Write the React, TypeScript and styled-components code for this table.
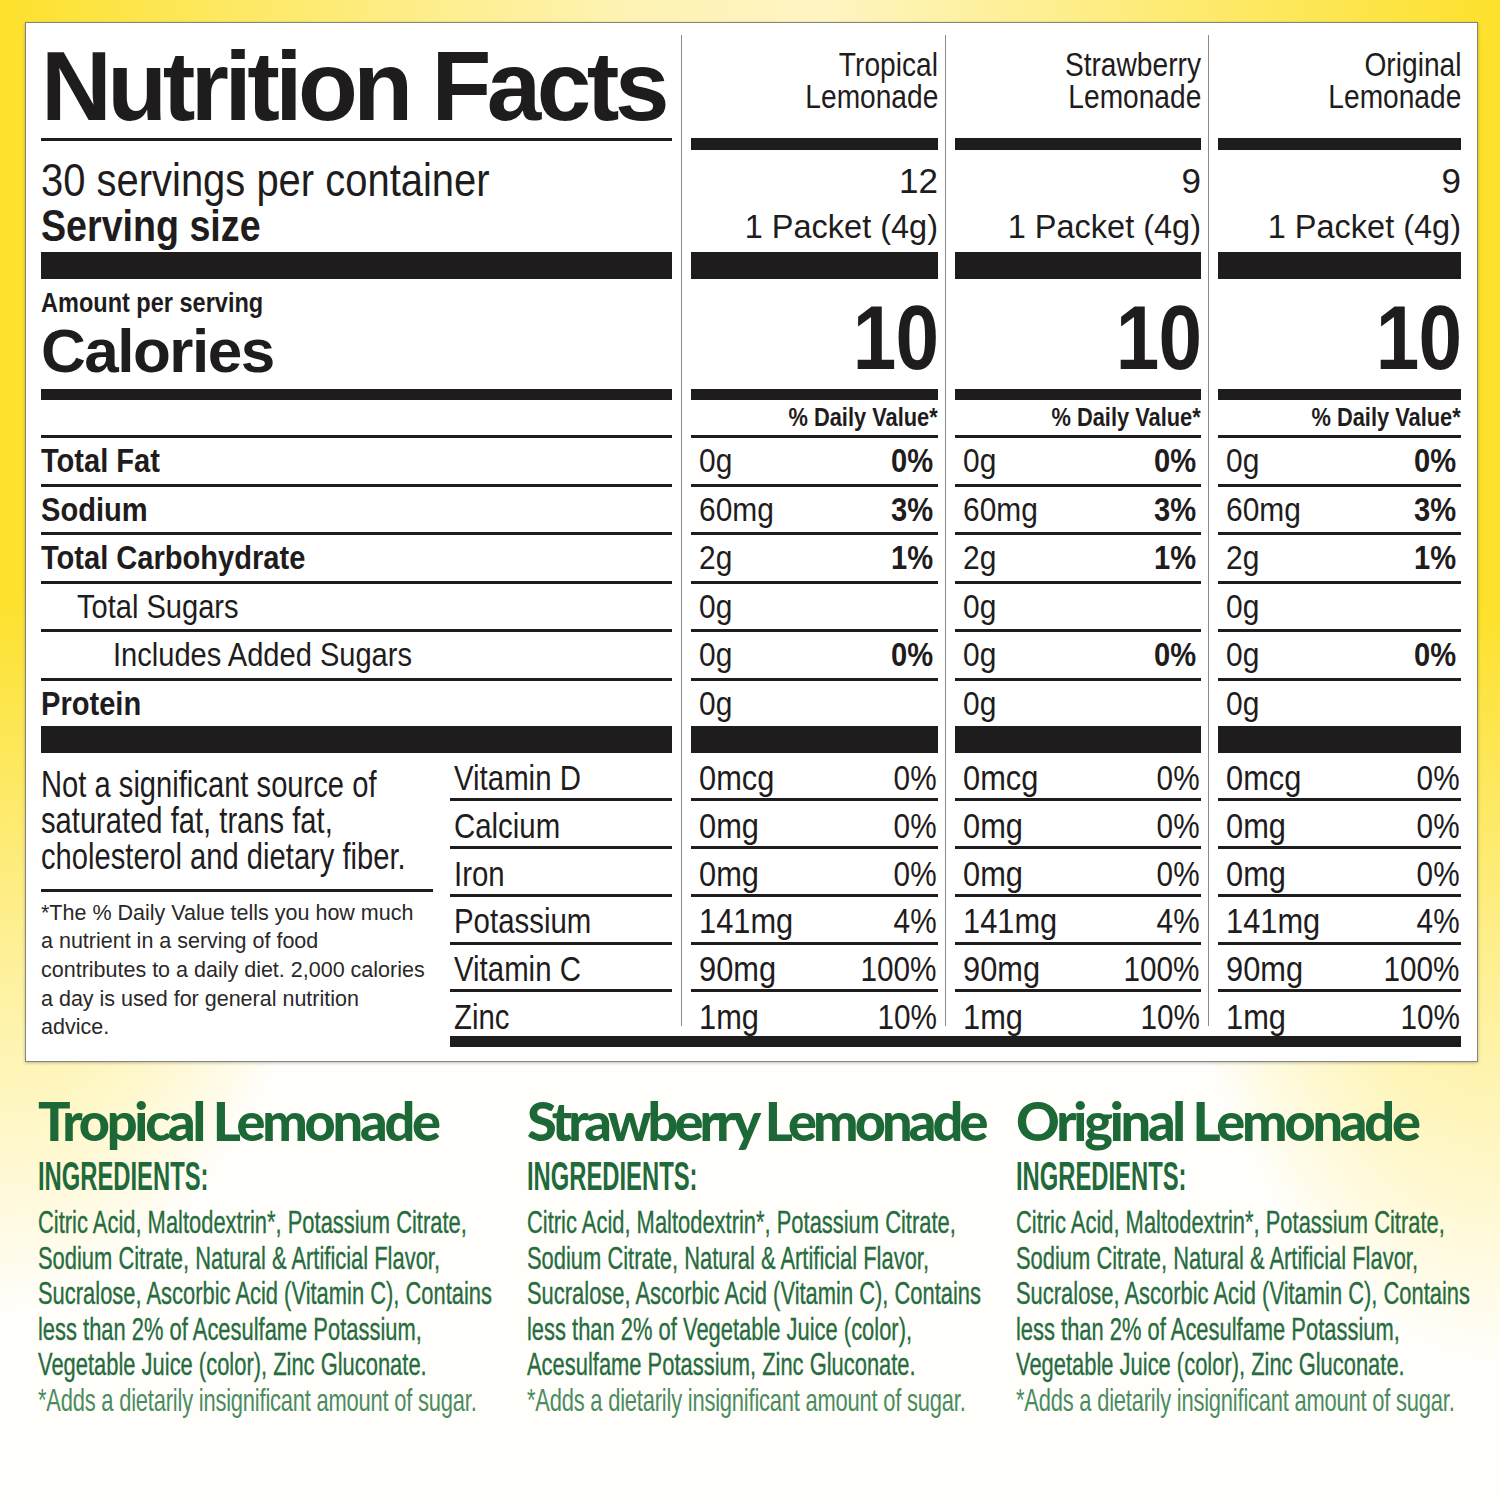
import React from 'react';
import styled, { createGlobalStyle } from 'styled-components';

const SANS = `"Liberation Sans", Arial, Helvetica, sans-serif`;
const INK = '#1f1c1d';

const GlobalStyle = createGlobalStyle`
  html, body { margin: 0; padding: 0; }
  body { width: 1500px; height: 1500px; overflow: hidden; background: #fff; font-family: ${SANS}; }
  *, *::before, *::after { box-sizing: border-box; }
`;

/* condensed text: Helvetica Condensed look from Liberation Sans */
const Cond = styled.span<{ $r?: boolean; $k?: number }>`
  display: inline-block;
  white-space: nowrap;
  transform: scaleX(${(p) => p.$k ?? 0.85});
  transform-origin: ${(p) => (p.$r ? 'right' : 'left')} center;
`;

const Page = styled.div`
  width: 1500px;
  height: 1500px;
  padding: 22px 0 0 25px;
  display: flex;
  flex-direction: column;
  background:
    linear-gradient(90deg, #fde12c 0%, #fde85e 14%, #fef3b4 42%, #fef5c2 55%, #fdeb74 78%, #fde12c 100%) 0 0 / 100% 40px no-repeat,
    radial-gradient(ellipse 430px 1050px at 0 260px, #fde12c 0%, #fde12c 32%, rgba(253, 225, 44, 0.45) 68%, rgba(253, 225, 44, 0) 100%),
    radial-gradient(ellipse 430px 1100px at 100% 260px, #fde12c 0%, #fde12c 32%, rgba(253, 225, 44, 0.45) 68%, rgba(253, 225, 44, 0) 100%),
    #fffefa;
`;

const Card = styled.section`
  width: 1453px;
  height: 1040px;
  flex: none;
  background: #fff;
  border: 1px solid #85857a;
  box-shadow: 0 1px 3px rgba(0, 0, 0, 0.25);
  padding: 12px 16px 0 15px;
  display: flex;
  flex-direction: column;
  color: ${INK};
  font-family: ${SANS};
`;

const Upper = styled.div`
  display: flex;
  height: 718.5px;
  flex: none;
`;

const Lower = styled.div`
  display: flex;
  flex: none;
`;

const LeftPanel = styled.div`
  width: 631px;
  flex: none;
  display: flex;
  flex-direction: column;
`;

const Cols = styled.div`
  display: flex;
  margin-left: 9px;
`;

const ProductCol = styled.div<{ $w: number; $last?: boolean }>`
  width: ${(p) => p.$w}px;
  flex: none;
  border-left: 1px solid #8a8a8a;
  padding-left: 9px;
  padding-right: ${(p) => (p.$last ? 0 : 7)}px;
  display: flex;
  flex-direction: column;
`;

const Bar = styled.div<{ $h: number }>`
  height: ${(p) => p.$h}px;
  flex: none;
  background: ${INK};
`;

/* ---------- left panel ---------- */
const TitleBlock = styled.div`
  height: 103px;
  flex: none;
  padding-top: 2px;
`;

const Title = styled.h1`
  margin: 0;
  font-weight: 700;
  font-size: 98px;
  line-height: 98px;
  letter-spacing: -4.5px;
  white-space: nowrap;
`;

const ServingBlock = styled.div`
  height: 111.5px;
  flex: none;
  padding-top: 18.5px;
`;

const ServingsLine = styled.div`
  font-size: 47px;
  line-height: 41px;
`;

const ServingSize = styled.div`
  margin-top: 4px;
  font-weight: 700;
  font-size: 44px;
  line-height: 43px;
`;

const CalBlock = styled.div`
  height: 110px;
  flex: none;
  padding-top: 10px;
`;

const AmountLine = styled.div`
  font-weight: 700;
  font-size: 28px;
  line-height: 28px;
`;

const CaloriesLabel = styled.div`
  margin-top: 2.5px;
  font-weight: 700;
  font-size: 62px;
  line-height: 62px;
  letter-spacing: -1.5px;
`;

const Spacer = styled.div<{ $h: number }>`
  height: ${(p) => p.$h}px;
  flex: none;
`;

const LabelRow = styled.div<{ $indent: number; $bold: boolean }>`
  height: 45.5px;
  flex: none;
  display: flex;
  align-items: center;
  padding-left: ${(p) => p.$indent}px;
  font-weight: ${(p) => (p.$bold ? 700 : 400)};
  font-size: 34px;
`;

/* ---------- product columns ---------- */
const ColHead = styled.div`
  height: 103px;
  flex: none;
  padding-top: 14px;
  text-align: right;
  font-size: 33.5px;
  line-height: 32px;
`;

const ColServing = styled.div`
  height: 102px;
  flex: none;
  padding-top: 8px;
  text-align: right;
  font-size: 32.5px;
  line-height: 45px;
  white-space: nowrap;
`;

const ServCount = styled.span`
  font-size: 35px;
`;

const ColCalories = styled.div`
  height: 110px;
  flex: none;
  padding-top: 14px;
  text-align: right;
  font-weight: 700;
  font-size: 90px;
  line-height: 90px;
  letter-spacing: -1px;
`;

const DVHeader = styled.div`
  height: 35px;
  flex: none;
  text-align: right;
  font-weight: 700;
  font-size: 26px;
  line-height: 35px;
`;

const ValueRow = styled.div`
  height: 45.5px;
  flex: none;
  display: flex;
  align-items: center;
  justify-content: space-between;
  padding: 0 5px 0 8px;
  font-size: 34px;
`;

const Pct = styled(Cond)<{ $bold?: boolean }>`
  font-weight: ${(p) => (p.$bold ? 700 : 400)};
`;

/* ---------- lower section ---------- */
const NoteCol = styled.div`
  width: 409px;
  flex: none;
  padding: 13.5px 17px 0 0;
`;

const NoteText = styled.p`
  margin: 0;
  font-size: 36px;
  line-height: 36px;
`;

const NoteRule = styled.div`
  height: 3px;
  margin-top: 14px;
  background: ${INK};
`;

const Footnote = styled.p`
  margin: 6.5px 0 0;
  font-size: 21.5px;
  line-height: 28.7px;
  color: #2a2828;
  white-space: nowrap;
`;

const VitBlock = styled.div`
  flex: 1;
  display: flex;
  flex-direction: column;
`;

const VitGrid = styled.div`
  display: flex;
  height: 272.5px;
`;

const NamesCol = styled.div`
  width: 222px;
  flex: none;
  display: flex;
  flex-direction: column;
`;

const VitRow = styled.div<{ $last?: boolean; $split?: boolean }>`
  height: ${(p) => (p.$last ? 33.5 : 44.75)}px;
  flex: none;
  display: flex;
  justify-content: ${(p) => (p.$split ? 'space-between' : 'flex-start')};
  padding: ${(p) => (p.$split ? '7.5px 1px 0 8px' : '7.5px 0 0 4px')};
  font-size: 35px;
  line-height: 34px;
`;

const BottomBar = styled.div`
  height: 11px;
  margin-top: 10px;
  background: ${INK};
`;

/* ---------- ingredients ---------- */
const IngSection = styled.div`
  display: flex;
  margin: 32px 0 0 13px;
`;

const IngCol = styled.div`
  width: 489px;
  flex: none;
`;

const IngTitle = styled.h2<{ $tight?: boolean }>`
  margin: 0;
  font-family: Lato, "Liberation Sans", sans-serif;
  font-weight: 900;
  font-size: 54px;
  line-height: 54px;
  letter-spacing: ${(p) => (p.$tight ? -3.9 : -3.2)}px;
  color: #1c6836;
  white-space: nowrap;
`;

const IngLabel = styled.div`
  margin-top: 8px;
  font-weight: 700;
  font-size: 41px;
  line-height: 40px;
  color: #1e6a3a;
  transform: scaleX(0.58);
  transform-origin: left center;
  white-space: nowrap;
`;

const IngBody = styled.div`
  margin-top: 9px;
  width: 720px;
  transform: scaleX(0.685);
  transform-origin: left top;
  font-size: 32px;
  line-height: 35.6px;
`;

const IngLine = styled.div<{ $note?: boolean }>`
  white-space: nowrap;
  color: ${(p) => (p.$note ? '#4a8c5e' : '#266c3e')};
  -webkit-text-stroke: ${(p) => (p.$note ? '0' : '0.35px')} currentColor;
  letter-spacing: ${(p) => (p.$note ? '-0.3px' : '0')};
`;

/* ---------- data ---------- */
const products = [
  { name: ['Tropical', 'Lemonade'], servings: '12', w: 264 },
  { name: ['Strawberry', 'Lemonade'], servings: '9', w: 263 },
  { name: ['Original', 'Lemonade'], servings: '9', w: 253 },
];

const nutrients = [
  { label: 'Total Fat', bold: true, indent: 0, value: '0g', dv: '0%' },
  { label: 'Sodium', bold: true, indent: 0, value: '60mg', dv: '3%' },
  { label: 'Total Carbohydrate', bold: true, indent: 0, value: '2g', dv: '1%' },
  { label: 'Total Sugars', bold: false, indent: 36, value: '0g', dv: '' },
  { label: 'Includes Added Sugars', bold: false, indent: 72, value: '0g', dv: '0%' },
  { label: 'Protein', bold: true, indent: 0, value: '0g', dv: '' },
];

const vitamins = [
  { name: 'Vitamin D', value: '0mcg', dv: '0%' },
  { name: 'Calcium', value: '0mg', dv: '0%' },
  { name: 'Iron', value: '0mg', dv: '0%' },
  { name: 'Potassium', value: '141mg', dv: '4%' },
  { name: 'Vitamin C', value: '90mg', dv: '100%' },
  { name: 'Zinc', value: '1mg', dv: '10%' },
];

const standardLines = [
  'Citric Acid, Maltodextrin*, Potassium Citrate,',
  'Sodium Citrate, Natural & Artificial Flavor,',
  'Sucralose, Ascorbic Acid (Vitamin C), Contains',
  'less than 2% of Acesulfame Potassium,',
  'Vegetable Juice (color), Zinc Gluconate.',
];

const strawberryLines = [
  'Citric Acid, Maltodextrin*, Potassium Citrate,',
  'Sodium Citrate, Natural & Artificial Flavor,',
  'Sucralose, Ascorbic Acid (Vitamin C), Contains',
  'less than 2% of Vegetable Juice (color),',
  'Acesulfame Potassium, Zinc Gluconate.',
];

const ingredients = [
  { title: 'Tropical Lemonade', lines: standardLines, tight: false },
  { title: 'Strawberry Lemonade', lines: strawberryLines, tight: true },
  { title: 'Original Lemonade', lines: standardLines, tight: false },
];

const noteLines = ['Not a significant source of', 'saturated fat, trans fat,', 'cholesterol and dietary fiber.'];

const footLines = [
  '*The % Daily Value tells you how much',
  'a nutrient in a serving of food',
  'contributes to a daily diet. 2,000 calories',
  'a day is used for general nutrition',
  'advice.',
];

function Rows({ children }: { children: React.ReactNode[] }) {
  return (
    <>
      {children.map((c, i) => (
        <React.Fragment key={i}>
          {c}
          {i < children.length - 1 && <Bar $h={3} />}
        </React.Fragment>
      ))}
    </>
  );
}

export default function App() {
  return (
    <Page>
      <GlobalStyle />
      <Card>
        <Upper>
          <LeftPanel>
            <TitleBlock>
              <Title>Nutrition Facts</Title>
            </TitleBlock>
            <Bar $h={2.5} />
            <ServingBlock>
              <ServingsLine>
                <Cond $k={0.85}>30 servings per container</Cond>
              </ServingsLine>
              <ServingSize>
                <Cond $k={0.855}>Serving size</Cond>
              </ServingSize>
            </ServingBlock>
            <Bar $h={27} />
            <CalBlock>
              <AmountLine>
                <Cond $k={0.84}>Amount per serving</Cond>
              </AmountLine>
              <CaloriesLabel>Calories</CaloriesLabel>
            </CalBlock>
            <Bar $h={11} />
            <Spacer $h={35} />
            <Bar $h={3} />
            <Rows>
              {nutrients.map((n) => (
                <LabelRow key={n.label} $indent={n.indent} $bold={n.bold}>
                  <Cond $k={0.855}>{n.label}</Cond>
                </LabelRow>
              ))}
            </Rows>
            <Bar $h={27} />
          </LeftPanel>
          <Cols>
            {products.map((p, i) => (
              <ProductCol key={p.name[0]} $w={p.w} $last={i === products.length - 1}>
                <ColHead>
                  <Cond $r $k={0.84}>{p.name[0]}</Cond>
                  <br />
                  <Cond $r $k={0.84}>{p.name[1]}</Cond>
                </ColHead>
                <Bar $h={12} />
                <ColServing>
                  <ServCount>{p.servings}</ServCount>
                  <br />1 Packet (4g)
                </ColServing>
                <Bar $h={27} />
                <ColCalories>
                  <Cond $r $k={0.87}>10</Cond>
                </ColCalories>
                <Bar $h={11} />
                <DVHeader>
                  <Cond $r $k={0.84}>% Daily Value*</Cond>
                </DVHeader>
                <Bar $h={3} />
                <Rows>
                  {nutrients.map((n) => (
                    <ValueRow key={n.label}>
                      <Cond $k={0.88}>{n.value}</Cond>
                      <Pct $bold $r $k={0.857}>
                        {n.dv}
                      </Pct>
                    </ValueRow>
                  ))}
                </Rows>
                <Bar $h={27} />
              </ProductCol>
            ))}
          </Cols>
        </Upper>
        <Lower>
          <NoteCol>
            <NoteText>
              {noteLines.map((l, i) => (
                <React.Fragment key={l}>
                  <Cond $k={0.81}>{l}</Cond>
                  {i < noteLines.length - 1 && <br />}
                </React.Fragment>
              ))}
            </NoteText>
            <NoteRule />
            <Footnote>
              {footLines.map((l, i) => (
                <React.Fragment key={l}>
                  {l}
                  {i < footLines.length - 1 && <br />}
                </React.Fragment>
              ))}
            </Footnote>
          </NoteCol>
          <VitBlock>
            <VitGrid>
              <NamesCol>
                <Rows>
                  {vitamins.map((v, i) => (
                    <VitRow key={v.name} $last={i === vitamins.length - 1}>
                      <Cond $k={0.84}>{v.name}</Cond>
                    </VitRow>
                  ))}
                </Rows>
              </NamesCol>
              <Cols>
                {products.map((p, i) => (
                  <ProductCol key={p.name[0]} $w={p.w} $last={i === products.length - 1}>
                    <Rows>
                      {vitamins.map((v, j) => (
                        <VitRow key={v.name} $split $last={j === vitamins.length - 1}>
                          <Cond $k={0.88}>{v.value}</Cond>
                          <Pct $r $k={0.85}>
                            {v.dv}
                          </Pct>
                        </VitRow>
                      ))}
                    </Rows>
                  </ProductCol>
                ))}
              </Cols>
            </VitGrid>
            <BottomBar />
          </VitBlock>
        </Lower>
      </Card>
      <IngSection>
        {ingredients.map((ing) => (
          <IngCol key={ing.title}>
            <IngTitle $tight={ing.tight}>{ing.title}</IngTitle>
            <IngLabel>INGREDIENTS:</IngLabel>
            <IngBody>
              {ing.lines.map((l) => (
                <IngLine key={l}>{l}</IngLine>
              ))}
              <IngLine $note>*Adds a dietarily insignificant amount of sugar.</IngLine>
            </IngBody>
          </IngCol>
        ))}
      </IngSection>
    </Page>
  );
}
